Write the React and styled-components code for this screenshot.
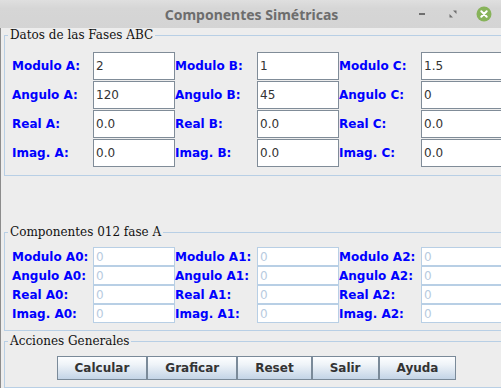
import styled, { createGlobalStyle } from 'styled-components';

const GlobalStyle = createGlobalStyle`
	html, body {
		margin: 0;
		padding: 0;
		background: #ededed;
		overflow: hidden;
	}
`;

const Window = styled.div`
	width: 513px;
	height: 388px;
	display: flex;
	flex-direction: column;
	background: #ededed;
	overflow: hidden;
`;

const TitleBar = styled.div`
	height: 28px;
	flex: none;
	display: grid;
	grid-template-columns: 1fr auto 1fr;
	align-items: center;
	padding-right: 10px;
	background: linear-gradient(#dfdfdf, #d6d6d6 30%, #d4d4d4);
`;

const Title = styled.div`
	grid-column: 2;
	font: bold 14px 'Noto Sans', sans-serif;
	color: #6d6d6d;
	white-space: nowrap;
`;

const Controls = styled.div`
	grid-column: 3;
	justify-self: end;
	display: flex;
	gap: 1px;
	padding-right: 4px;
`;

const ControlBox = styled.div`
	width: 30px;
	height: 28px;
	display: flex;
	align-items: center;
	justify-content: center;
`;

const Content = styled.div`
	flex: 1;
	padding-left: 3px;
	border-left: 1px solid #8c8c8c;
`;

const Panel = styled.fieldset`
	box-sizing: border-box;
	width: 505px;
	min-width: 0;
	margin: ${(p) => p.$top || 0}px 0 0 0;
	padding: ${(p) => p.$padTop}px 0 ${(p) => p.$padBottom}px 0;
	border: 1px solid #b8cfe5;
`;

const Legend = styled.legend`
	margin-left: 3px;
	padding: 0 2px;
	font: 12px/14px 'DejaVu Serif', serif;
	color: #111;
`;

const FieldGrid = styled.div`
	display: grid;
	grid-template-columns: 81px repeat(5, 82px);
	grid-auto-rows: ${(p) => p.$row}px;
	row-gap: ${(p) => p.$gap}px;
	margin-left: 7px;
	align-items: center;
`;

const Label = styled.span`
	font: bold 12px 'DejaVu Sans', sans-serif;
	color: #0000ff;
	white-space: nowrap;
`;

const Field = styled.input`
	box-sizing: border-box;
	width: 82px;
	height: 100%;
	margin: 0;
	padding: 0 2px;
	border: 1px solid ${(p) => (p.$muted ? '#b8cfe5' : '#808c98')};
	background: #fff;
	font: 12px 'DejaVu Sans', sans-serif;
	color: ${(p) => (p.$muted ? '#b8cbe0' : '#333')};
	outline: none;

	&:disabled {
		color: #b8cbe0;
		-webkit-text-fill-color: #b8cbe0;
		opacity: 1;
	}
`;

const ButtonRow = styled.div`
	display: flex;
	justify-content: center;
`;

const ActionButton = styled.button`
	height: 24px;
	margin: 0;
	padding: 0 17px;
	border: 1px solid #7a8a99;
	border-radius: 0;
	background: linear-gradient(#fdfeff 0%, #eef3f8 35%, #c3d4e6 100%);
	font: bold 12px 'DejaVu Sans', sans-serif;
	color: #333;
`;

const phaseRows = [
	['Modulo', ['2', '1', '1.5']],
	['Angulo', ['120', '45', '0']],
	['Real', ['0.0', '0.0', '0.0']],
	['Imag.', ['0.0', '0.0', '0.0']],
];

const seqRows = ['Modulo', 'Angulo', 'Real', 'Imag.'];

const actions = ['Calcular', 'Graficar', 'Reset', 'Salir', 'Ayuda'];

function WindowControls() {
	return (
		<Controls>
			<ControlBox>
				<svg width="8" height="4" viewBox="0 0 8 4">
					<rect x="1" y="1" width="6" height="2" fill="#6f6f6f" />
				</svg>
			</ControlBox>
			<ControlBox>
				<svg width="8" height="8" viewBox="0 0 8 8">
					<path d="M4 0.5 H7.5 V4 Z" fill="#6f6f6f" />
					<path d="M0.5 4 V7.5 H4 Z" fill="#6f6f6f" />
				</svg>
			</ControlBox>
			<ControlBox>
				<svg width="16" height="16" viewBox="0 0 16 16">
					<circle cx="8" cy="8" r="7.5" fill="#87b35a" />
					<path d="M5.3 5.3 L10.7 10.7 M10.7 5.3 L5.3 10.7" stroke="#fff" strokeWidth="2" strokeLinecap="round" />
				</svg>
			</ControlBox>
		</Controls>
	);
}

export default function App() {
	return (
		<Window>
			<GlobalStyle />
			<TitleBar>
				<Title>Componentes Simétricas</Title>
				<WindowControls />
			</TitleBar>
			<Content>
				<Panel $padTop={10} $padBottom={8}>
					<Legend>Datos de las Fases ABC</Legend>
					<FieldGrid $row={28} $gap={1}>
						{phaseRows.map(([name, values]) =>
							['A', 'B', 'C'].map((phase, i) => [
								<Label key={`${name}${phase}l`}>{`${name} ${phase}:`}</Label>,
								<Field key={`${name}${phase}f`} readOnly defaultValue={values[i]} />,
							])
						)}
					</FieldGrid>
				</Panel>
				<Panel $top={49} $padTop={8} $padBottom={7}>
					<Legend>Componentes 012 fase A</Legend>
					<FieldGrid $row={19} $gap={0}>
						{seqRows.map((name) =>
							['A0', 'A1', 'A2'].map((seq) => [
								<Label key={`${name}${seq}l`}>{`${name} ${seq}:`}</Label>,
								<Field key={`${name}${seq}f`} $muted disabled defaultValue="0" />,
							])
						)}
					</FieldGrid>
				</Panel>
				<Panel $top={3} $padTop={8} $padBottom={7}>
					<Legend>Acciones Generales</Legend>
					<ButtonRow>
						{actions.map((label) => (
							<ActionButton key={label}>{label}</ActionButton>
						))}
					</ButtonRow>
				</Panel>
			</Content>
		</Window>
	);
}
